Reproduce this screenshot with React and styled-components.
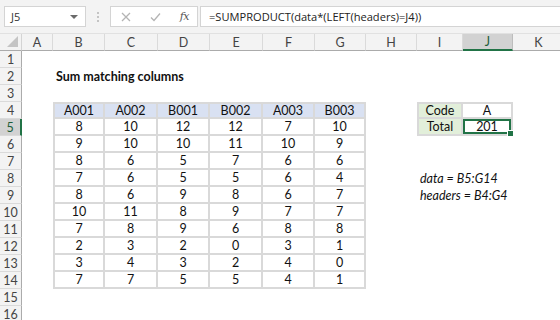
import React from 'react';
import styled, { createGlobalStyle, css } from 'styled-components';

const GlobalStyle = createGlobalStyle`
  html, body { margin: 0; padding: 0; background: #ffffff; overflow: hidden; }
  #root { width: 560px; height: 320px; }
`;

const COLS = ['A', 'B', 'C', 'D', 'E', 'F', 'G', 'H', 'I', 'J', 'K'];
const WIDTHS = [31, 52, 53, 52, 53, 52, 51, 51, 46, 50, 52];
const ROW_COUNT = 16;

const TABLE = [
  ['A001', 'A002', 'B001', 'B002', 'A003', 'B003'],
  [8, 10, 12, 12, 7, 10],
  [9, 10, 10, 11, 10, 9],
  [8, 6, 5, 7, 6, 6],
  [7, 6, 5, 5, 6, 4],
  [8, 6, 9, 8, 6, 7],
  [10, 11, 8, 9, 7, 7],
  [7, 8, 9, 6, 8, 8],
  [2, 3, 2, 0, 3, 1],
  [3, 4, 3, 2, 4, 0],
  [7, 7, 5, 5, 4, 1],
];

const Window = styled.div`
  width: 560px;
  height: 320px;
  display: flex;
  flex-direction: column;
  overflow: hidden;
  background: #ffffff;
`;

const FormulaBar = styled.div`
  height: 34px;
  flex: none;
  box-sizing: border-box;
  display: flex;
  align-items: center;
  padding: 0 0 0 4px;
  background: #f3f3f3;
  border-bottom: 1px solid #e1e1e1;
`;

const Box = styled.div`
  box-sizing: border-box;
  height: 21px;
  background: #ffffff;
  border: 1px solid #d4d4d4;
  display: flex;
  align-items: center;
`;

const NameBox = styled(Box)`
  width: 82px;
  padding: 0 6px;
  justify-content: space-between;
  font-family: 'Open Sans', sans-serif;
  font-size: 11px;
  color: #333;
`;

const Caret = styled.span`
  width: 0;
  height: 0;
  border-left: 4px solid transparent;
  border-right: 4px solid transparent;
  border-top: 4px solid #6a6a6a;
  margin-right: 1px;
`;

const Grip = styled.div`
  width: 24px;
  display: flex;
  flex-direction: column;
  align-items: center;
  gap: 2px;
  span {
    width: 2px;
    height: 2px;
    background: #c4c4c4;
  }
`;

const ActionBox = styled(Box)`
  width: 88px;
  padding: 0 8px 0 10px;
  justify-content: space-between;
  color: #b8b8b8;
`;

const Fx = styled.span`
  font-family: 'DejaVu Serif', serif;
  font-style: italic;
  font-size: 11px;
  color: #555;
  letter-spacing: -0.5px;
`;

const FormulaInput = styled(Box)`
  flex: 1;
  margin-left: 2px;
  padding-left: 8px;
  border-right: none;
  font-family: 'Open Sans', sans-serif;
  font-size: 11.1px;
  color: #222;
  white-space: nowrap;
`;

const Sheet = styled.div`
  flex: 1;
  display: grid;
  grid-template-columns: 22px ${WIDTHS.map((w) => `${w}px`).join(' ')};
  grid-auto-rows: 17px;
  overflow: hidden;
`;

const HeaderBase = css`
  box-sizing: border-box;
  display: flex;
  align-items: center;
  justify-content: center;
  font-family: Lato, sans-serif;
  font-size: 12.5px;
  color: #444;
`;

const Corner = styled.div`
  ${HeaderBase};
  background: #f3f3f3;
  border-right: 1px solid #d4d4d4;
  border-bottom: 1px solid #ababab;
  position: relative;
  &::after {
    content: '';
    position: absolute;
    right: 3px;
    bottom: 3px;
    width: 0;
    height: 0;
    border-left: 11px solid transparent;
    border-bottom: 11px solid #c4c4c4;
  }
`;

const ColHeader = styled.div`
  ${HeaderBase};
  background: ${(p) => (p.$active ? '#d2d2d2' : '#f3f3f3')};
  border-right: 1px solid ${(p) => (p.$active ? '#bdbdbd' : '#dadada')};
  border-bottom: ${(p) => (p.$active ? '2px solid #217346' : '1px solid #ababab')};
  color: ${(p) => (p.$active ? '#1d5e3a' : '#444')};
`;

const RowHeader = styled.div`
  ${HeaderBase};
  background: ${(p) => (p.$active ? '#d2d2d2' : '#f3f3f3')};
  border-bottom: 1px solid #dadada;
  border-right: ${(p) => (p.$active ? '2px solid #217346' : '1px solid #ababab')};
  color: ${(p) => (p.$active ? '#1d5e3a' : '#444')};
`;

const BG = {
  th: '#d9e1f2',
  label: '#e2efda',
};

const LINE = '2px solid #d9d9d9';

const Cell = styled.div`
  box-sizing: border-box;
  position: relative;
  display: flex;
  align-items: center;
  justify-content: ${(p) => (p.$align === 'left' ? 'flex-start' : 'center')};
  padding: 0 3px;
  white-space: nowrap;
  overflow: visible;
  font-family: Lato, sans-serif;
  font-size: 12.5px;
  color: #111;
  font-weight: ${(p) => (p.$bold ? 700 : 400)};
  font-style: ${(p) => (p.$italic ? 'italic' : 'normal')};
  background: ${(p) => BG[p.$kind] || 'transparent'};
  ${(p) =>
    p.$boxed &&
    css`
      border-right: ${LINE};
      border-bottom: ${LINE};
    `}
  ${(p) => p.$left && css`border-left: ${LINE};`}
  ${(p) => p.$top && css`border-top: ${LINE};`}
  ${(p) =>
    p.$active &&
    css`
      box-shadow: inset 0 0 0 2px #217346;
    `}
`;

const FillHandle = styled.span`
  position: absolute;
  right: -3px;
  bottom: -3px;
  width: 5px;
  height: 5px;
  background: #217346;
  border: 1px solid #ffffff;
  z-index: 2;
`;

function cellInfo(row, col) {
  // col: 0 = A ... 10 = K
  if (row === 2 && col === 1) return { text: 'Sum matching columns', bold: true, align: 'left' };
  if (row >= 4 && row <= 14 && col >= 1 && col <= 6) {
    return {
      text: TABLE[row - 4][col - 1],
      kind: row === 4 ? 'th' : 'td',
      boxed: true,
      left: col === 1,
      top: row === 4,
    };
  }
  if (row >= 4 && row <= 5 && (col === 8 || col === 9)) {
    const text = col === 8 ? (row === 4 ? 'Code' : 'Total') : row === 4 ? 'A' : '201';
    return {
      text,
      kind: col === 8 ? 'label' : 'value',
      boxed: true,
      left: col === 8,
      top: row === 4,
      active: row === 5 && col === 9,
    };
  }
  if (col === 8 && row === 8) return { text: 'data = B5:G14', italic: true, align: 'left' };
  if (col === 8 && row === 9) return { text: 'headers = B4:G4', italic: true, align: 'left' };
  return { text: '' };
}

export default function App() {
  const rows = Array.from({ length: ROW_COUNT }, (_, i) => i + 1);
  return (
    <>
      <GlobalStyle />
      <Window>
        <FormulaBar>
          <NameBox>
            <span>J5</span>
            <Caret />
          </NameBox>
          <Grip>
            <span />
            <span />
            <span />
          </Grip>
          <ActionBox>
            <svg width="10" height="10" viewBox="0 0 10 10">
              <path d="M1 1 L9 9 M9 1 L1 9" stroke="#b4b4b4" strokeWidth="1.3" fill="none" />
            </svg>
            <svg width="11" height="10" viewBox="0 0 11 10">
              <path d="M1 5.5 L4 8.5 L10 1.5" stroke="#b4b4b4" strokeWidth="1.3" fill="none" />
            </svg>
            <Fx>fx</Fx>
          </ActionBox>
          <FormulaInput>=SUMPRODUCT(data*(LEFT(headers)=J4))</FormulaInput>
        </FormulaBar>
        <Sheet>
          <Corner />
          {COLS.map((c) => (
            <ColHeader key={c} $active={c === 'J'}>
              {c}
            </ColHeader>
          ))}
          {rows.map((r) => (
            <React.Fragment key={r}>
              <RowHeader $active={r === 5}>{r}</RowHeader>
              {COLS.map((c, ci) => {
                const info = cellInfo(r, ci);
                return (
                  <Cell
                    key={c}
                    $kind={info.kind}
                    $boxed={info.boxed}
                    $left={info.left}
                    $top={info.top}
                    $align={info.align}
                    $bold={info.bold}
                    $italic={info.italic}
                    $active={info.active}
                  >
                    {info.text}
                    {info.active && <FillHandle />}
                  </Cell>
                );
              })}
            </React.Fragment>
          ))}
        </Sheet>
      </Window>
    </>
  );
}
